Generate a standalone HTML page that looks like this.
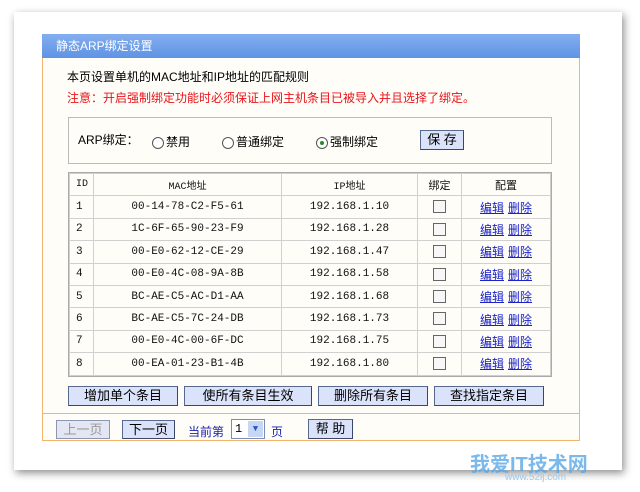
<!DOCTYPE html>
<html><head><meta charset="utf-8"><style>
*{margin:0;padding:0;box-sizing:border-box}
body{width:640px;height:492px;background:#fff;position:relative;overflow:hidden;font-family:"Liberation Sans","Noto Sans CJK SC",sans-serif;font-size:12px;color:#000}
.abs{position:absolute}
.card{left:14px;top:12px;width:608px;height:458px;background:#fff;box-shadow:2px 3px 8px rgba(0,0,0,.45)}
.panel{left:42px;top:34px;width:538px;height:407px;border:1px solid #f3b56b;background:#fffdf7}
.hdr{left:42px;top:34px;width:538px;height:24px;background:linear-gradient(#84aef0,#5f93e3);color:#fff;font-size:12px;line-height:24px;padding-left:14px}
.btn{position:absolute;background:#dbe3fb;border:1px solid #58698f;border-right-color:#3a476a;border-bottom-color:#3a476a;text-align:center;font-size:13px;line-height:18px}
table{position:absolute;left:68px;top:172px;width:484px;border-collapse:separate;border-spacing:1px;background:#d0d0d0;border:1px solid #aaa}
td{background:#fffdf8;height:21.4px;padding:0;text-align:center;font-family:"Liberation Mono","Noto Sans CJK SC",monospace;font-size:11px;color:#111}
td:first-child{text-align:left;padding-left:6px}
a{color:#1a22c8;text-decoration:underline;font-family:"Liberation Sans","Noto Sans CJK SC",sans-serif;font-size:12px;margin:0 2px}
.cb{display:inline-block;width:13px;height:13px;border:1px solid #666;background:#f7f7f7;vertical-align:middle}
.radio{display:inline-block;width:12px;height:12px;border:1px solid #555;border-radius:50%;vertical-align:middle;background:#fff;position:relative;margin-right:2px}
</style></head><body>
<div class="abs card"></div>
<div class="abs panel"></div>
<div class="abs" style="left:42px;top:413px;width:538px;height:1px;background:#f3b56b"></div>
<div class="abs hdr">静态ARP绑定设置</div>
<div class="abs" style="left:67px;top:68px;font-size:12px">本页设置单机的MAC地址和IP地址的匹配规则</div>
<div class="abs" style="left:67px;top:89px;font-size:12px;color:#e8141c">注意：开启强制绑定功能时必须保证上网主机条目已被导入并且选择了绑定。</div>
<div class="abs" style="left:68px;top:117px;width:484px;height:47px;border:1px solid #bbb;background:#fffdf7"></div>
<div class="abs" style="left:78px;top:131px">ARP绑定：</div>
<div class="abs" style="left:152px;top:133px"><span class="radio"></span>禁用</div>
<div class="abs" style="left:222px;top:133px"><span class="radio"></span>普通绑定</div>
<div class="abs" style="left:316px;top:133px"><span class="radio"><span style="position:absolute;left:3px;top:3px;width:4px;height:4px;border-radius:50%;background:#2a8a2a"></span></span>强制绑定</div>
<div class="btn" style="left:420px;top:130px;width:44px;height:20px">保 存</div>
<table>
<tr><td style="width:23px;font-size:10px">ID</td><td style="width:187px;font-size:10px">MAC地址</td><td style="width:135px;font-size:10px">IP地址</td><td style="width:43px;font-family:'Liberation Sans','Noto Sans CJK SC',sans-serif">绑定</td><td style="font-family:'Liberation Sans','Noto Sans CJK SC',sans-serif">配置</td></tr>
<tr><td>1</td><td>00-14-78-C2-F5-61</td><td>192.168.1.10</td><td><span class="cb"></span></td><td><a>编辑</a><a>删除</a></td></tr>
<tr><td>2</td><td>1C-6F-65-90-23-F9</td><td>192.168.1.28</td><td><span class="cb"></span></td><td><a>编辑</a><a>删除</a></td></tr>
<tr><td>3</td><td>00-E0-62-12-CE-29</td><td>192.168.1.47</td><td><span class="cb"></span></td><td><a>编辑</a><a>删除</a></td></tr>
<tr><td>4</td><td>00-E0-4C-08-9A-8B</td><td>192.168.1.58</td><td><span class="cb"></span></td><td><a>编辑</a><a>删除</a></td></tr>
<tr><td>5</td><td>BC-AE-C5-AC-D1-AA</td><td>192.168.1.68</td><td><span class="cb"></span></td><td><a>编辑</a><a>删除</a></td></tr>
<tr><td>6</td><td>BC-AE-C5-7C-24-DB</td><td>192.168.1.73</td><td><span class="cb"></span></td><td><a>编辑</a><a>删除</a></td></tr>
<tr><td>7</td><td>00-E0-4C-00-6F-DC</td><td>192.168.1.75</td><td><span class="cb"></span></td><td><a>编辑</a><a>删除</a></td></tr>
<tr><td>8</td><td>00-EA-01-23-B1-4B</td><td>192.168.1.80</td><td><span class="cb"></span></td><td><a>编辑</a><a>删除</a></td></tr>
</table>
<div class="btn" style="left:68px;top:386px;width:110px;height:20px">增加单个条目</div>
<div class="btn" style="left:184px;top:386px;width:128px;height:20px">使所有条目生效</div>
<div class="btn" style="left:318px;top:386px;width:110px;height:20px">删除所有条目</div>
<div class="btn" style="left:434px;top:386px;width:110px;height:20px">查找指定条目</div>
<div class="btn" style="left:56px;top:420px;width:54px;height:19px;color:#999;background:#e3e6f3;border-color:#8c96b0">上一页</div>
<div class="btn" style="left:122px;top:420px;width:53px;height:19px">下一页</div>
<div class="abs" style="left:188px;top:423px;color:#1a22a8;font-size:12px">当前第</div>
<div class="abs" style="left:231px;top:419px;width:34px;height:20px;border:1px solid #7a8db5;background:#fff;font-family:'Liberation Mono',monospace;font-size:12px;padding-left:3px;line-height:18px">1<span style="position:absolute;right:1px;top:1px;width:15px;height:16px;background:#c7d6f5;color:#2456c8;font-size:9px;text-align:center;line-height:16px">▼</span></div>
<div class="abs" style="left:271px;top:423px;color:#1a22a8">页</div>
<div class="btn" style="left:308px;top:419px;width:45px;height:20px">帮 助</div>
<div class="abs" style="left:470px;top:448px;color:#5aa8e8;font-size:20px;font-weight:bold;opacity:.8">我爱IT技术网</div>
<div class="abs" style="left:505px;top:472px;color:#8cc0ea;font-size:10px;opacity:.8">www.52ij.com</div>
</body></html>
